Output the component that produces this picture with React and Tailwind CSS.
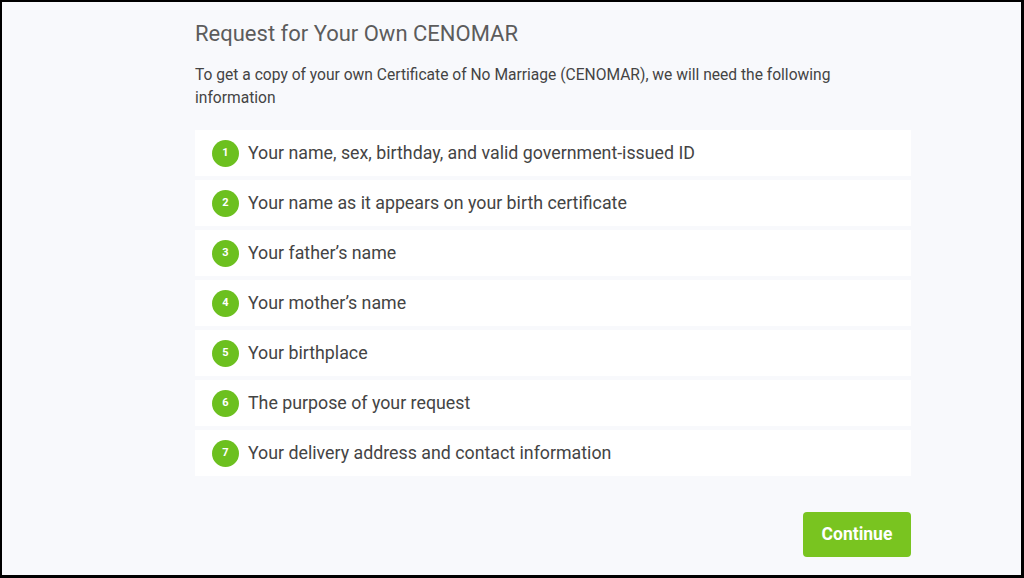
import React from "react";

const items = [
  "Your name, sex, birthday, and valid government-issued ID",
  "Your name as it appears on your birth certificate",
  "Your father’s name",
  "Your mother’s name",
  "Your birthplace",
  "The purpose of your request",
  "Your delivery address and contact information",
];

export default function App() {
  return (
    <div className="w-[1024px] h-[578px] bg-[#f8f9fc] border-l-2 border-t-2 border-r-[3px] border-b-[3px] border-black font-['Roboto',sans-serif]">
      <div className="ml-[193px] w-[716px] pt-[18px] flex flex-col">
        <h1 className="text-[22px] leading-[28px] text-[#5c5c5c] font-normal">
          Request for Your Own CENOMAR
        </h1>
        <p className="mt-[16px] max-w-[690px] text-[15.6px] leading-[23px] text-[#444]">
          To get a copy of your own Certificate of No Marriage (CENOMAR), we will need the following information
        </p>
        <ul className="mt-[20px] flex flex-col gap-[4px]">
          {items.map((text, i) => (
            <li key={i} className="h-[46px] bg-white flex items-center pl-[17px] gap-[9px]">
              <span className="w-[27px] h-[27px] rounded-full bg-[#6cc01f] text-white text-[11px] font-bold flex items-center justify-center">
                {i + 1}
              </span>
              <span className="text-[17.8px] text-[#444]">{text}</span>
            </li>
          ))}
        </ul>
        <div className="mt-[36px] flex justify-end">
          <button className="w-[108px] h-[45px] rounded-[4px] bg-[#79c420] text-white text-[17.5px] font-bold">
            Continue
          </button>
        </div>
      </div>
    </div>
  );
}
